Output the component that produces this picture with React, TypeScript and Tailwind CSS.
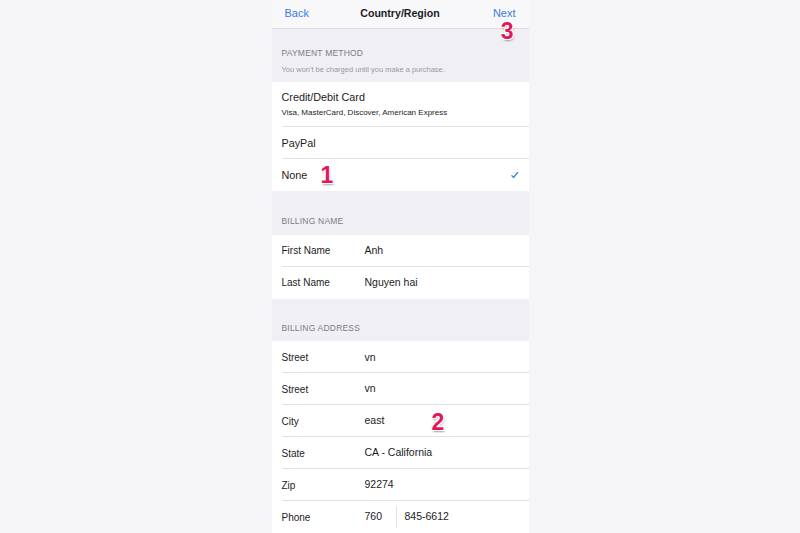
import React from "react";

const font = { fontFamily: '"Liberation Sans", Arial, sans-serif' };

function Marker({ n, className }: { n: string; className: string }) {
  return (
    <span
      className={`absolute text-[23px] font-black leading-[18px] text-[#e0195c] ${className}`}
      style={{
        textShadow:
          "-1px -1px 0 #fff, 1px -1px 0 #fff, -1px 1px 0 #fff, 1px 1px 0 #fff, 1px 2px 2px rgba(0,0,0,0.35)",
      }}
    >
      {n}
    </span>
  );
}

function SectionHeader({ title, sub, h }: { title: string; sub?: string; h: string }) {
  return (
    <div className={`flex flex-col justify-end bg-[#efeff4] px-[10px] pb-[7px] ${h}`}>
      <div className="text-[8.5px] uppercase tracking-[0.2px] text-[#7d7d82]">{title}</div>
      {sub && <div className="mt-[4px] text-[7.5px] text-[#9a9aa0]">{sub}</div>}
    </div>
  );
}

function Field({
  label,
  value,
  last,
  children,
}: {
  label: string;
  value?: string;
  last?: boolean;
  children?: React.ReactNode;
}) {
  return (
    <div className="relative flex h-[32px] items-center bg-white pl-[10px]">
      <span className="w-[83px] text-[10px] text-[#1c1c1e]">{label}</span>
      {children ?? <span className="text-[10.5px] text-[#1c1c1e]">{value}</span>}
      {!last && <div className="absolute bottom-0 left-[10px] right-0 h-px bg-[#e2e2e6]" />}
    </div>
  );
}

export default function App() {
  return (
    <div className="flex h-[533px] w-[800px] justify-center overflow-hidden bg-[#f5f5f8]" style={font}>
      <div className="relative flex w-[257px] flex-col">
        {/* nav */}
        <div className="relative flex h-[29px] items-center justify-between border-b border-[#dcdce0] bg-[#f8f8fa] px-[13px]">
          <span className="text-[11px] leading-[13px] text-[#3a7be0]">Back</span>
          <span className="absolute left-1/2 -translate-x-1/2 text-[10.6px] font-bold text-[#1c1c1e]">
            Country/Region
          </span>
          <span className="text-[11px] leading-[13px] text-[#3a7be0]">Next</span>
          <Marker n="3" className="right-[15px] top-[22px]" />
        </div>

        <SectionHeader title="Payment Method" sub="You won't be charged until you make a purchase." h="h-[53px]" />

        <div className="bg-white">
          <div className="relative flex h-[45px] flex-col pl-[10px] pt-[9px]">
            <span className="text-[10.8px] leading-[13px] text-[#1c1c1e]">Credit/Debit Card</span>
            <span className="mt-[4px] text-[8px] leading-[10px] text-[#1c1c1e]">
              Visa, MasterCard, Discover, American Express
            </span>
            <div className="absolute bottom-0 left-[10px] right-0 h-px bg-[#e2e2e6]" />
          </div>
          <div className="relative flex h-[32px] items-center pl-[10px]">
            <span className="text-[10.8px] text-[#1c1c1e]">PayPal</span>
            <div className="absolute bottom-0 left-[10px] right-0 h-px bg-[#e2e2e6]" />
          </div>
          <div className="relative flex h-[32px] items-center justify-between pl-[10px] pr-[10px]">
            <span className="text-[10.8px] text-[#1c1c1e]">None</span>
            <svg width="9" height="8" viewBox="0 0 9 8">
              <path d="M1.5 4.4 L3.6 6.5 L8 1.2" fill="none" stroke="#3a7be0" strokeWidth="1.3" />
            </svg>
            <Marker n="1" className="left-[49px] top-[7px]" />
          </div>
        </div>

        <SectionHeader title="Billing Name" h="h-[44px]" />
        <Field label="First Name" value="Anh" />
        <Field label="Last Name" value="Nguyen hai" last />

        <SectionHeader title="Billing Address" h="h-[43px]" />
        <Field label="Street" value="vn" />
        <Field label="Street" value="vn" />
        <div className="relative">
          <Field label="City" value="east" />
          <Marker n="2" className="left-[160px] top-[8px]" />
        </div>
        <Field label="State" value="CA - California" />
        <Field label="Zip" value="92274" />
        <Field label="Phone" last>
          <span className="flex items-center text-[10.5px] text-[#1c1c1e]">
            <span className="w-[31px]">760</span>
            <span className="mr-[8px] h-[22px] w-px bg-[#e2e2e6]" />
            <span>845-6612</span>
          </span>
        </Field>
      </div>
    </div>
  );
}
